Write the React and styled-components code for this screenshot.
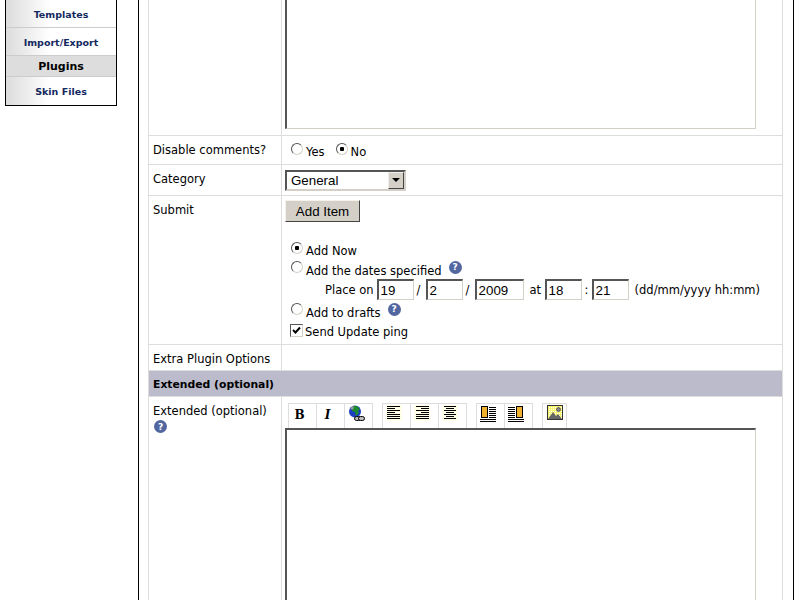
import React from 'react';
import styled, { createGlobalStyle } from 'styled-components';

const GlobalStyle = createGlobalStyle`
  html, body {
    margin: 0;
    height: 600px;
    overflow: hidden;
    background: #fff;
  }
  body {
    font-family: "DejaVu Sans", Verdana, sans-serif;
    font-size: 11.5px;
    color: #000;
  }
`

const Page = styled.div`
  display: flex;
  width: 800px;
  height: 600px;
  overflow: hidden;
`
const Sidebar = styled.div`
  width: 138px;
  flex-shrink: 0;
  padding-left: 5px;
  box-sizing: border-box;
`
const Menu = styled.div`
  width: 112px;
  box-sizing: border-box;
  border: 1px solid #000;
  border-top: 0;
`
const MenuLink = styled.div`
  height: 28px;
  box-sizing: border-box;
  padding-top: 1px;
  display: flex;
  align-items: center;
  justify-content: center;
  border-bottom: 1px solid #ccc;
  background: linear-gradient(to right, #dcdcdc, #fff 40%);
  color: #14295f;
  font-weight: bold;
  font-size: 9.5px;
  &:last-child {
    border-bottom: 0;
  }
`
const MenuHeading = styled.div`
  height: 21px;
  box-sizing: border-box;
  display: flex;
  align-items: center;
  justify-content: center;
  background: #dddddd;
  border-bottom: 1px solid #ccc;
  font-weight: bold;
  font-size: 11px;
`
const Content = styled.div`
  width: 656px;
  flex-shrink: 0;
  box-sizing: border-box;
  border-left: 1px solid #000;
  border-right: 1px solid #000;
  padding: 0 10px 0 9px;
  height: 600px;
`
const FormTable = styled.div`
  width: 635px;
  box-sizing: border-box;
  border-left: 1px solid #ddd;
  border-right: 1px solid #ddd;
`
const Row = styled.div`
  display: grid;
  grid-template-columns: 133px 1fr;
  height: ${props => props.$height}px;
  box-sizing: border-box;
  border-bottom: 1px solid #ddd;
  overflow: hidden;
`
const Label = styled.div`
  padding: 7px 4px 0 4px;
  border-right: 1px solid #ddd;
`
const Value = styled.div`
  padding-left: 3px;
  min-width: 0;
`
const SectionHeader = styled.div`
  height: 26px;
  box-sizing: border-box;
  background: #bbbbcc;
  font-weight: bold;
  font-size: 10.8px;
  display: flex;
  align-items: center;
  padding: 1px 0 0 4px;
  border-bottom: 1px solid #ddd;
`
const EditorBottom = styled.div`
  height: 134px;
  display: flex;
  align-items: flex-end;
  padding-bottom: 5px;
  box-sizing: border-box;
`
const Editor = styled.div`
  width: 471px;
  height: ${props => props.$height}px;
  flex-shrink: 0;
  box-sizing: border-box;
  border-top: 2px solid #555;
  border-left: 2px solid #555;
  border-right: 1px solid #d4d0c8;
  border-bottom: 1px solid #d4d0c8;
  background: #fff;
`
const InlineRow = styled.div`
  display: flex;
  align-items: center;
  box-sizing: border-box;
  height: ${props => props.$height}px;
  padding-left: ${props => props.$indent || 0}px;
  padding-top: ${props => props.$low ? 2 : 0}px;
  white-space: nowrap;
`
const Radio = styled.span`
  display: inline-block;
  width: 12px;
  height: 12px;
  box-sizing: border-box;
  border-radius: 50%;
  margin: ${props => props.$top ?? -7}px 3px 0 ${props => props.$left || 0}px;
  border: 1px solid;
  border-color: #555 #d4d0c8 #d4d0c8 #555;
  background: ${props => props.$checked
    ? 'radial-gradient(circle, #000 0 2px, #fff 2.5px)'
    : '#fff'};
`
const Checkbox = styled.span`
  width: 13px;
  height: 13px;
  box-sizing: border-box;
  margin: -3px 2px 0 -1px;
  border: 1px solid;
  border-color: #555 #d4d0c8 #d4d0c8 #555;
  display: inline-flex;
  align-items: center;
  justify-content: center;
  background: #fff;
`
const SelectBox = styled.div`
  display: flex;
  width: 121px;
  height: 21px;
  box-sizing: border-box;
  border: 2px solid;
  border-color: #555 #d4d0c8 #d4d0c8 #555;
  font-family: "Liberation Sans", Arial, sans-serif;
  font-size: 13.33px;
`
const SelectText = styled.div`
  flex: 1;
  padding: 1px 0 0 4px;
`
const SelectArrow = styled.div`
  width: 16px;
  box-sizing: border-box;
  background: #d4d0c8;
  border: 1px solid;
  border-color: #eee #444 #444 #eee;
  display: flex;
  align-items: center;
  justify-content: center;
  &::after {
    content: "";
    border: 4px solid transparent;
    border-top: 4px solid #000;
    border-bottom: 0;
  }
`
const Button = styled.div`
  width: 75px;
  height: 22px;
  box-sizing: border-box;
  background: #d4d0c8;
  border: 1px solid;
  border-color: #f4f2ec #444 #444 #f4f2ec;
  font-family: "Liberation Sans", Arial, sans-serif;
  font-size: 13.33px;
  display: flex;
  align-items: center;
  justify-content: center;
`
const SubmitBox = styled.div`
  padding-top: 4px;
`
const Options = styled.div`
  margin-top: 18px;
  padding-left: 6px;
`
const DateInput = styled.input`
  width: ${props => props.$width}px;
  height: 21px;
  box-sizing: border-box;
  padding: 1px 2px;
  border: 2px solid;
  border-color: #555 #d4d0c8 #d4d0c8 #555;
  border-right-width: 1px;
  border-bottom-width: 1px;
  font-family: "Liberation Sans", Arial, sans-serif;
  font-size: 13.33px;
  color: #000;
  outline: none;
`
const Sep = styled.span`
  width: ${props => props.$width}px;
  box-sizing: border-box;
  padding-left: ${props => props.$pad || 0}px;
  flex-shrink: 0;
`
const Help = styled.span`
  display: inline-flex;
  align-items: center;
  justify-content: center;
  width: 13px;
  height: 13px;
  border-radius: 50%;
  background: #52679f;
  color: #fff;
  font-size: 9px;
  font-weight: bold;
  margin-left: 7px;
  margin-top: -7px;
`
const HelpLine = styled.div`
  margin-top: 2px;
  padding-left: 1px;
  line-height: 0;
  ${Help} {
    margin: 0;
  }
`
const Toolbar = styled.div`
  display: flex;
  height: 25px;
  padding: 1px 0 0 3px;
  box-sizing: content-box;
  margin-top: 5px;
`
const ToolGroup = styled.div`
  display: flex;
  margin-right: 10px;
`
const ToolButton = styled.div`
  width: ${props => props.$width || 29}px;
  height: 25px;
  box-sizing: border-box;
  border: 1px solid #ddd;
  border-bottom: 0;
  margin-right: -1px;
  display: flex;
  justify-content: center;
  padding: 1px ${props => props.$width ? 0 : 6}px 0 0;
`
const FormatLetter = styled.span`
  font-family: "DejaVu Serif", "Liberation Serif", serif;
  font-weight: bold;
  font-style: ${props => props.$italic ? 'italic' : 'normal'};
  font-size: 12px;
  line-height: 20px;
`
const LinkSvg = styled.svg`
  margin-left: 3px;
`

const AlignIcon = ({ lines }) => (
  <svg width="16" height="17" viewBox="0 0 16 17">
    <rect x="0" y="0" width="16" height="16" fill="#ffffe8" />
    {lines.map(([x, w], i) => (
      <rect key={i} x={x} y={1 + i * 2} width={w} height="1" fill="#000" />
    ))}
  </svg>
)

const LEFT = [[1, 13], [1, 8], [1, 13], [1, 8], [1, 13], [1, 13], [1, 13]]
const RIGHT = [[2, 13], [7, 8], [2, 13], [7, 8], [2, 13], [2, 13], [2, 13]]
const CENTER = [[2, 12], [4, 8], [2, 12], [4, 8], [2, 12], [4, 8], [2, 12]]

const LinkIcon = () => (
  <LinkSvg width="18" height="18" viewBox="0 0 18 18">
    <circle cx="7" cy="6.500" r="6" fill="#1c3fc0" />
    <path fill="#1c8a2e" d="M5 1h4l3 3-2 2 1 2-3 3-1-4-3-1z" />
    <path fill="#9a9a9a" d="M2 3l3-2 1 2-2 2z" />
    <rect x="6.500" y="11.500" width="6" height="4" rx="2" fill="#bbb" stroke="#000" />
    <rect x="10.500" y="11.500" width="6" height="4" rx="2" fill="#bbb" stroke="#000" />
  </LinkSvg>
)
const FloatIcon = ({ flip }) => (
  <svg width="18" height="18" viewBox="0 0 18 18">
    <g transform={flip ? 'matrix(-1 0 0 1 18 0)' : undefined}>
      <rect x="2.500" y="1.500" width="6" height="11" fill="#f0b030" stroke="#000" />
      {[2, 4, 6, 8, 10, 12].map(y => (
        <rect key={y} x="10" y={y} width="7" height="1" fill="#000" />
      ))}
      <rect x="1" y="14" width="16" height="1" fill="#000" />
      <rect x="1" y="16" width="16" height="1" fill="#000" />
    </g>
  </svg>
)
const ImageIcon = () => (
  <svg width="16" height="16" viewBox="0 0 16 16">
    <defs>
      <pattern id="dots" width="2" height="2" patternUnits="userSpaceOnUse">
        <rect width="2" height="2" fill="#f8f470" />
        <rect width="1" height="1" fill="#fff" />
      </pattern>
    </defs>
    <rect x=".5" y=".5" width="15" height="14" fill="url(#dots)" stroke="#333" />
    <circle cx="11.500" cy="4.500" r="2" fill="#888" stroke="#222" strokeWidth=".6" />
    <path fill="#666" d="M1 14l5-7 3 4 2-2 4 5z" />
  </svg>
)
const CheckMark = () => (
  <svg width="9" height="9" viewBox="0 0 9 9">
    <path fill="none" stroke="#000" strokeWidth="2" d="M1 4l2.500 2.500L8 1.500" />
  </svg>
)

const App = () => {
  return (
    <Page>
      <GlobalStyle />
      <Sidebar>
        <Menu>
          <MenuLink>Templates</MenuLink>
          <MenuLink>Import/Export</MenuLink>
          <MenuHeading>Plugins</MenuHeading>
          <MenuLink>Skin Files</MenuLink>
        </Menu>
      </Sidebar>
      <Content>
        <FormTable>
          <Row $height={136}>
            <Label />
            <Value>
              <EditorBottom>
                <Editor $height={160} />
              </EditorBottom>
            </Value>
          </Row>
          <Row $height={29}>
            <Label>Disable comments?</Label>
            <Value>
              <InlineRow $height={29} $indent={6} $low>
                <Radio $top={-5} />
                <span>Yes</span>
                <Radio $checked $top={-5} $left={11} />
                <span>No</span>
              </InlineRow>
            </Value>
          </Row>
          <Row $height={31}>
            <Label>Category</Label>
            <Value>
              <InlineRow $height={30}>
                <SelectBox>
                  <SelectText>General</SelectText>
                  <SelectArrow />
                </SelectBox>
              </InlineRow>
            </Value>
          </Row>
          <Row $height={149}>
            <Label>Submit</Label>
            <Value>
              <SubmitBox>
                <Button>Add Item</Button>
                <Options>
                  <InlineRow $height={20} $low>
                    <Radio $checked />
                    <span>Add Now</span>
                  </InlineRow>
                  <InlineRow $height={19} $low>
                    <Radio />
                    <span>Add the dates specified</span>
                    <Help>?</Help>
                  </InlineRow>
                  <InlineRow $height={21} $indent={34}>
                    <span>Place on</span>
                    <Sep $width={3} />
                    <DateInput $width={37} defaultValue="19" />
                    <Sep $width={12} $pad={3}>/</Sep>
                    <DateInput $width={37} defaultValue="2" />
                    <Sep $width={12} $pad={3}>/</Sep>
                    <DateInput $width={49} defaultValue="2009" />
                    <Sep $width={21} $pad={6}>at</Sep>
                    <DateInput $width={37} defaultValue="18" />
                    <Sep $width={10} $pad={3}>:</Sep>
                    <DateInput $width={37} defaultValue="21" />
                    <Sep $width={6} />
                    <span>(dd/mm/yyyy hh:mm)</span>
                  </InlineRow>
                  <InlineRow $height={23} $low>
                    <Radio />
                    <span>Add to drafts</span>
                    <Help>?</Help>
                  </InlineRow>
                  <InlineRow $height={17}>
                    <Checkbox><CheckMark /></Checkbox>
                    <span>Send Update ping</span>
                  </InlineRow>
                </Options>
              </SubmitBox>
            </Value>
          </Row>
          <Row $height={26}>
            <Label>Extra Plugin Options</Label>
            <Value />
          </Row>
          <SectionHeader>Extended (optional)</SectionHeader>
          <Row $height={300}>
            <Label>
              Extended (optional)
              <HelpLine><Help>?</Help></HelpLine>
            </Label>
            <Value>
              <Toolbar>
                <ToolGroup>
                  <ToolButton><FormatLetter>B</FormatLetter></ToolButton>
                  <ToolButton><FormatLetter $italic>I</FormatLetter></ToolButton>
                  <ToolButton><LinkIcon /></ToolButton>
                </ToolGroup>
                <ToolGroup>
                  <ToolButton><AlignIcon lines={LEFT} /></ToolButton>
                  <ToolButton><AlignIcon lines={RIGHT} /></ToolButton>
                  <ToolButton><AlignIcon lines={CENTER} /></ToolButton>
                </ToolGroup>
                <ToolGroup>
                  <ToolButton><FloatIcon /></ToolButton>
                  <ToolButton><FloatIcon flip /></ToolButton>
                </ToolGroup>
                <ToolGroup>
                  <ToolButton $width={25}><ImageIcon /></ToolButton>
                </ToolGroup>
              </Toolbar>
              <Editor $height={240} />
            </Value>
          </Row>
        </FormTable>
      </Content>
    </Page>
  )
}

export default App
